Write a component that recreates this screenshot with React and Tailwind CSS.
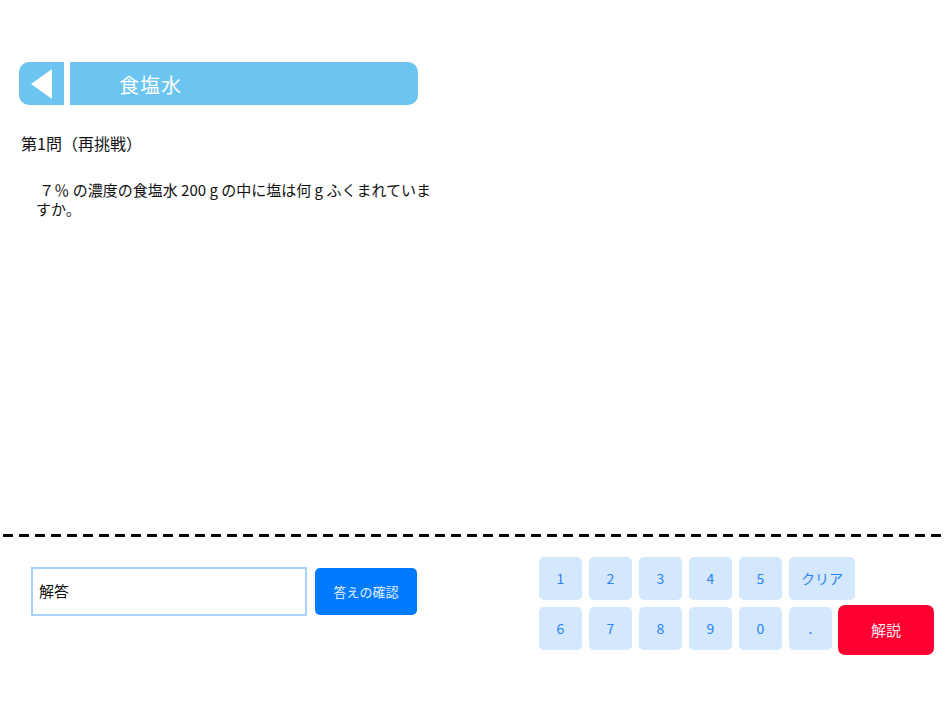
import React, { useState } from "react";

const font = { fontFamily: '"Noto Sans CJK JP", "Noto Sans", sans-serif' };

function Key({ label, wide, onPress }) {
  return (
    <button
      onClick={() => onPress(label)}
      className={`h-[43px] ${wide ? "w-[66px]" : "w-[43px]"} rounded-[5px] bg-[#d3e7fd] text-[#2a84f0] text-[14px] flex items-center justify-center shrink-0`}
    >
      {label}
    </button>
  );
}

export default function App() {
  const [answer, setAnswer] = useState("");

  const press = (k) => {
    if (k === "クリア") setAnswer("");
    else setAnswer((a) => a + k);
  };

  return (
    <div className="w-[950px] h-[712px] bg-white text-[#111] flex flex-col" style={font}>
      {/* header */}
      <div className="pt-[62px] pl-[19px]">
        <div className="flex h-[43px] w-[399px]">
          <button className="w-[45px] h-full bg-[#6cc4f1] rounded-l-[10px] flex items-center justify-center shrink-0">
            <svg width="22" height="30" viewBox="0 0 22 30">
              <polygon points="21,0 21,30 0,15" fill="#fff" />
            </svg>
          </button>
          <div className="ml-[6px] flex-1 bg-[#6cc4f1] rounded-r-[10px] flex items-center pl-[49px] pt-[3px] text-white text-[20px] tracking-[1px]">
            食塩水
          </div>
        </div>
      </div>

      {/* question */}
      <div className="pl-[21px] mt-[27px] text-[16px] leading-[22px]">第1問（再挑戦）</div>
      <p className="pl-[36px] w-[440px] mt-[26px] text-[15px] leading-[19px]">
        &nbsp;７％ の濃度の食塩水 200 g の中に塩は何 g ふくまれていますか。
      </p>

      <div className="flex-1" />

      {/* divider */}
      <div className="mx-[3px] h-[3px] bg-[repeating-linear-gradient(90deg,#000_0_10px,transparent_10px_16px)]" />

      {/* bottom */}
      <div className="flex h-[175px]">
        <div className="flex items-start pt-[30px] pl-[31px] gap-[8px]">
          <div className="w-[276px] h-[49px] border-2 border-[#a8d1fb] flex items-center px-[6px] text-[15px]">
            {answer || "解答"}
          </div>
          <button className="mt-[1px] w-[102px] h-[47px] rounded-[5px] bg-[#007aff] text-[#e6f1ff] text-[13px]">
            答えの確認
          </button>
        </div>
        <div className="ml-[122px] pt-[20px] flex flex-col gap-[5px]">
          <div className="flex gap-[7px]">
            {["1", "2", "3", "4", "5"].map((k) => (
              <Key key={k} label={k} onPress={press} />
            ))}
            <Key label="クリア" wide onPress={press} />
          </div>
          <div className="flex items-start">
            <div className="flex gap-[7px] pt-[2px]">
              {["6", "7", "8", "9", "0", "."].map((k) => (
                <Key key={k} label={k} onPress={press} />
              ))}
            </div>
            <button className="ml-[6px] w-[96px] h-[50px] rounded-[7px] bg-[#ff0033] text-[#ffe6ea] text-[15px]">
              解説
            </button>
          </div>
        </div>
      </div>
    </div>
  );
}
